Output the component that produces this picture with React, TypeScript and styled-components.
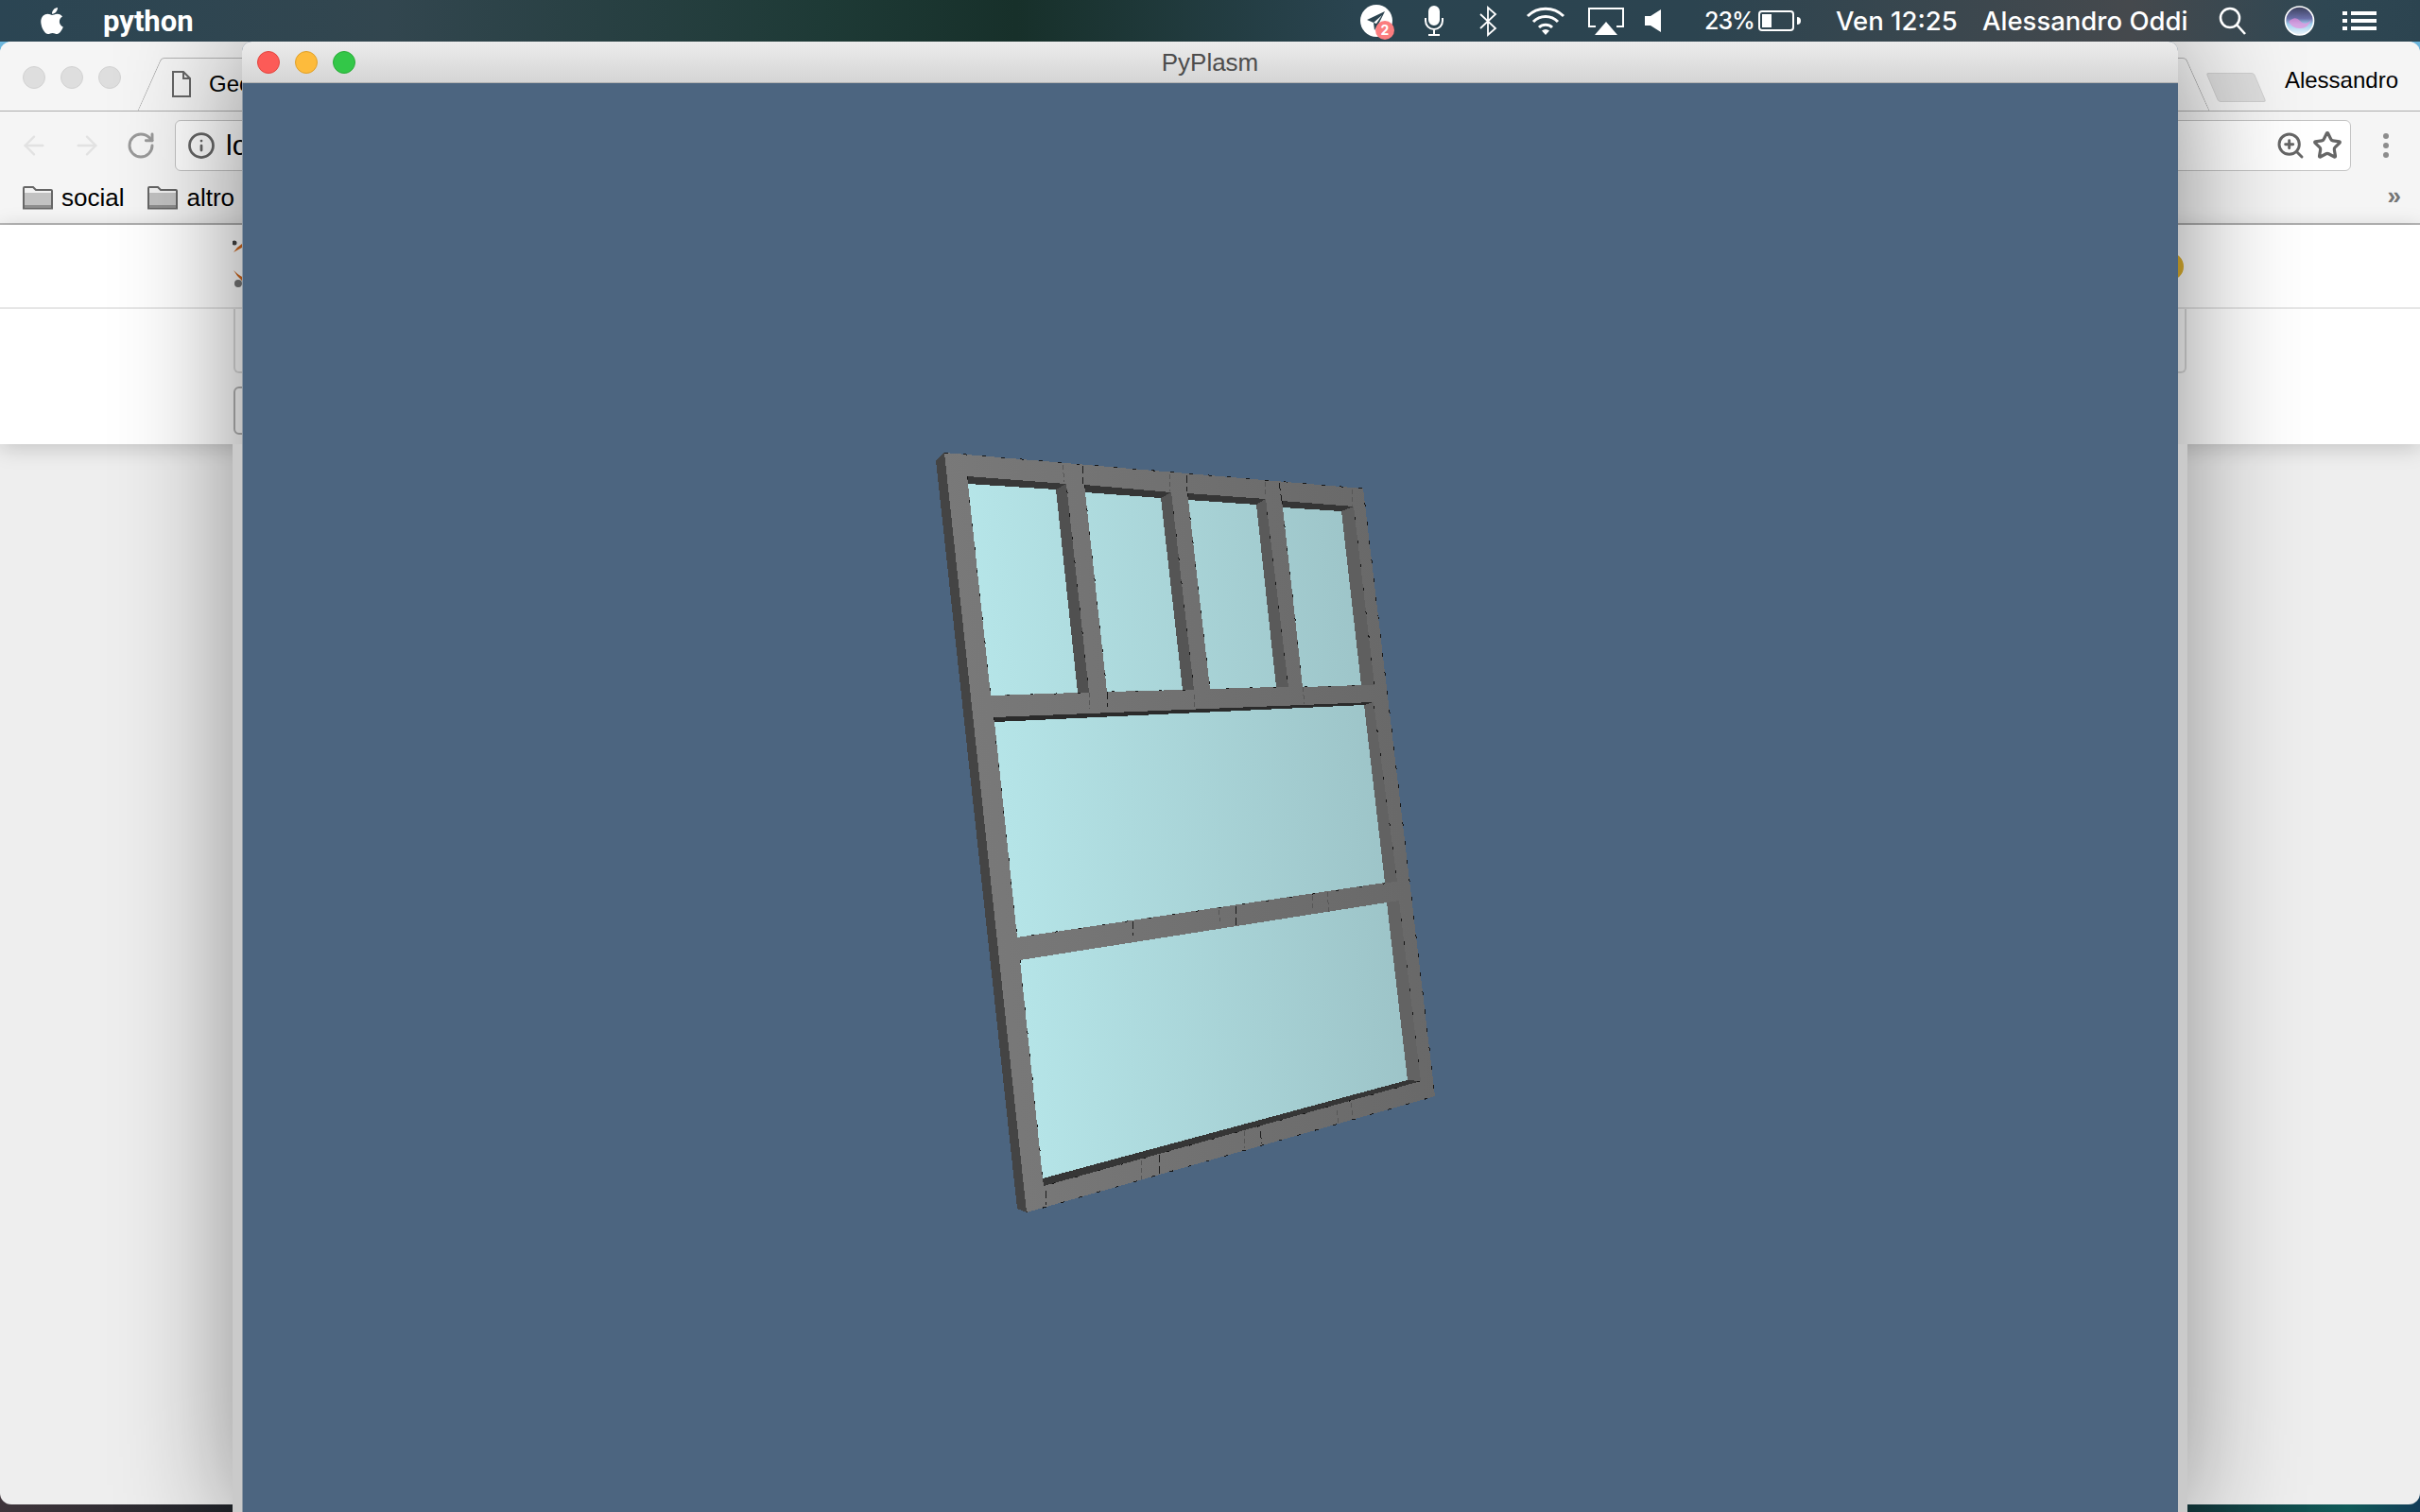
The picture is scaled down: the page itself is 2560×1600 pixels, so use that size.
import React from 'react';
import styled, { createGlobalStyle } from 'styled-components';
import { FaApple } from 'react-icons/fa';
import { ArrowLeft, ArrowRight, RotateCw, Info, Star, ZoomIn } from 'lucide-react';

const GlobalStyle = createGlobalStyle`
    html, body {
        margin: 0;
        padding: 0;
        width: 2560px;
        height: 1600px;
        overflow: hidden;
        font-family: "Liberation Sans", Arial, sans-serif;
    }
`;

const Desktop = styled.div`
    position: relative;
    width: 2560px;
    height: 1600px;
    overflow: hidden;
    background:
        linear-gradient(#6cb6dc 0, #6cb6dc 100px, transparent 100px),
        linear-gradient(90deg, #3f353b 0, #1a2127 12%, #142a30 88%, #0f5a58 97%, #123c58 100%);
`;

const MenuBar = styled.header`
    position: relative;
    z-index: 2;
    height: 44px;
    display: flex;
    align-items: center;
    color: #fff;
    font-family: Inter, "Liberation Sans", sans-serif;
    background: linear-gradient(90deg, #2b4553 0, #32464f 16%, #1e3a36 34%, #17302a 42%, #2a4450 56%, #2c4450 70%, #45494d 88%, #2f4753 96%, #2c4450 100%);
`;

const MenuApp = styled.span`
    margin-left: 40px;
    font-family: Roboto, sans-serif;
    font-size: 31px;
    font-weight: 700;
`;

const MenuRight = styled.div`
    margin-left: auto;
    display: flex;
    align-items: center;
`;

const Slot = styled.div<{ $w: number; $ml: number }>`
    position: relative;
    width: ${p => p.$w}px;
    margin-left: ${p => p.$ml}px;
    height: 44px;
    display: flex;
    align-items: center;
    justify-content: center;
`;

const MenuText = styled.span<{ $ml: number; $w: number; $size: number; $track?: number }>`
    width: ${p => p.$w}px;
    margin-left: ${p => p.$ml}px;
    font-size: ${p => p.$size}px;
    font-weight: 500;
    letter-spacing: ${p => p.$track ?? 0}px;
    white-space: nowrap;
`;

const Badge = styled.span`
    position: absolute;
    left: 16px;
    top: 22px;
    width: 20px;
    height: 20px;
    border-radius: 50%;
    background: #fb7d7f;
    color: #fff;
    font-size: 14px;
    font-weight: 700;
    line-height: 20px;
    text-align: center;
`;

const Browser = styled.div`
    height: 1548px;
    display: flex;
    flex-direction: column;
    border-radius: 12px;
    overflow: hidden;
    background: #eeeeee;
`;

const TabStrip = styled.div`
    height: 74px;
    box-sizing: border-box;
    display: flex;
    align-items: flex-start;
    background: #f5f5f5;
    border-bottom: 1px solid #adadad;
`;

const GreyLights = styled.div`
    display: flex;
    gap: 16px;
    margin: 26px 0 0 24px;
`;

const GreyLight = styled.span`
    width: 24px;
    height: 24px;
    box-sizing: border-box;
    border-radius: 50%;
    background: #dedede;
    border: 1px solid #d2d2d2;
`;

const Tab = styled.div`
    position: relative;
    margin: 17px 0 0 17px;
    width: 2193px;
    height: 56px;
    display: flex;
    align-items: center;
    gap: 19px;
    padding-left: 37px;
    box-sizing: border-box;
    font-size: 24px;
    color: #000;

    &::before,
    &::after {
        content: '';
        position: absolute;
        top: 0;
        bottom: 0;
        width: 40px;
        border-top: 1px solid #b4b4b4;
    }
    &::before {
        left: 13px;
        border-left: 1px solid #a8a8a8;
        border-top-left-radius: 4px;
        transform: skewX(-24deg);
    }
    &::after {
        right: 13px;
        border-right: 1px solid #a8a8a8;
        border-top-right-radius: 4px;
        transform: skewX(24deg);
    }
`;

const TabTopLine = styled.span`
    position: absolute;
    top: 0;
    left: 40px;
    right: 40px;
    border-top: 1px solid #b4b4b4;
`;

const NewTab = styled.div`
    width: 51px;
    height: 31px;
    box-sizing: border-box;
    margin: 33px 0 0 2px;
    background: #dedede;
    border: 1px solid #d0d0d0;
    border-radius: 3px;
    transform: skewX(23deg);
`;

const ProfileName = styled.span`
    margin: 27px 23px 0 auto;
    font-size: 24px;
    line-height: 28px;
    color: #000;
`;

const Toolbar = styled.div`
    height: 120px;
    box-sizing: border-box;
    padding-top: 9px;
    background: #f5f5f5;
    border-bottom: 2px solid #b8b8b8;
`;

const NavRow = styled.div`
    height: 54px;
    display: flex;
    align-items: center;
    color: #e2e2e2;
`;

const NavButton = styled.span<{ $ml: number; $color?: string }>`
    display: flex;
    margin-left: ${p => p.$ml}px;
    color: ${p => p.$color ?? 'inherit'};
`;

const Omnibox = styled.div`
    margin-left: 20px;
    width: 2302px;
    height: 54px;
    box-sizing: border-box;
    display: flex;
    align-items: center;
    padding: 0 8px 0 12px;
    background: #fff;
    border: 1px solid #c4c4c4;
    border-radius: 6px;
    color: #666;
`;

const OmniText = styled.span`
    margin-left: 11px;
    font-size: 30px;
    color: #000;
`;

const OmniTools = styled.div`
    margin-left: auto;
    display: flex;
    align-items: center;
    gap: 7px;
`;

const MoreDots = styled.div`
    margin-left: 34px;
    display: flex;
    flex-direction: column;
    gap: 4px;
`;

const Dot = styled.span`
    width: 6px;
    height: 6px;
    border-radius: 50%;
    background: #8c8c8c;
`;

const BookmarkRow = styled.div`
    height: 55px;
    display: flex;
    align-items: center;
    padding: 2px 0 0 24px;
    box-sizing: border-box;
    font-size: 26px;
    color: #000;
`;

const Bookmark = styled.div`
    display: flex;
    align-items: center;
    gap: 9px;
    margin-right: 25px;
`;

const Chevrons = styled.span`
    margin: -4px 20px 0 auto;
    font-size: 26px;
    font-weight: 700;
    color: #757575;
`;

const PageTop = styled.div`
    position: relative;
    z-index: 0;
    height: 232px;
    background: #fff;
    box-shadow: 0 4px 22px rgba(0, 0, 0, 0.18);
`;

const SiteHeader = styled.div`
    height: 89px;
    box-sizing: border-box;
    display: flex;
    align-items: center;
    justify-content: space-between;
    padding: 0 250px 0 246px;
    border-bottom: 2px solid #e6e6e6;
`;

const YellowDot = styled.span`
    width: 30px;
    height: 30px;
    border-radius: 50%;
    background: #e2b431;
`;

const FormColumn = styled.div`
    width: 2066px;
    margin: 0 auto;
`;

const TextArea = styled.div`
    height: 68px;
    box-sizing: border-box;
    border: 2px solid #dcdcdc;
    border-top: 0;
    border-radius: 0 0 6px 6px;
`;

const TextInput = styled.div`
    width: 1900px;
    height: 51px;
    box-sizing: border-box;
    margin-top: 14px;
    border: 2px solid #b4b4b4;
    border-radius: 6px;
`;

const PlasmWindow = styled.section`
    position: absolute;
    z-index: 1;
    left: 256px;
    top: 44px;
    width: 2048px;
    height: 1570px;
    display: flex;
    flex-direction: column;
    border-radius: 10px 10px 0 0;
    background: #4c6580;
    box-shadow: 0 0 130px rgba(0, 0, 0, 0.48);

    /* page column peeking out on both sides of the window */
    &::before {
        content: '';
        position: absolute;
        z-index: -1;
        left: -10px;
        right: -10px;
        top: 426px;
        bottom: 0;
        background: #cacaca;
    }
`;

const TitleBar = styled.div`
    position: relative;
    height: 44px;
    flex: none;
    box-sizing: border-box;
    display: flex;
    align-items: center;
    justify-content: center;
    padding-top: 2px;
    border-radius: 10px 10px 0 0;
    border-bottom: 1px solid #b2b2b2;
    background: linear-gradient(#ececec, #d5d5d5);
    font-size: 26px;
    color: #4d4d4d;
`;

const Lights = styled.div`
    position: absolute;
    left: 16px;
    top: 10px;
    display: flex;
    gap: 16px;
`;

const Light = styled.span<{ $color: string; $edge: string }>`
    width: 24px;
    height: 24px;
    box-sizing: border-box;
    border-radius: 50%;
    background: ${p => p.$color};
    border: 1px solid ${p => p.$edge};
`;

const Viewport = styled.div`
    flex: 1;
    box-sizing: border-box;
    background: #4c6580;
    box-shadow: inset 1px 0 0 #8d98a4;
`;

const Scene = styled.svg`
    display: block;
    width: 2048px;
    height: 1526px;
    shape-rendering: crispEdges;
`;

type Pt = [number, number];

const pts = (list: Pt[]) => list.map(p => p.join(',')).join(' ');

const panes: { open: Pt[]; glass: Pt[]; strips: { poly: Pt[]; fill: string }[] }[] = [
    {
        open: [[1023, 504], [1128, 512], [1152, 733], [1048, 736]],
        glass: [[1024, 512], [1117, 518], [1140, 733], [1048, 736]],
        strips: [
            { poly: [[1117, 518], [1128, 512], [1152, 733], [1140, 733]], fill: '#505050' },
            { poly: [[1023, 504], [1128, 512], [1117, 518], [1024, 512]], fill: '#383838' },
        ],
    },
    {
        open: [[1147, 513], [1239, 521], [1263, 730], [1171, 732]],
        glass: [[1148, 521], [1228, 527], [1251, 730], [1171, 732]],
        strips: [
            { poly: [[1228, 527], [1239, 521], [1263, 730], [1251, 730]], fill: '#555555' },
            { poly: [[1147, 513], [1239, 521], [1228, 527], [1148, 521]], fill: '#363636' },
        ],
    },
    {
        open: [[1256, 522], [1339, 528], [1363, 727], [1280, 729]],
        glass: [[1257, 529], [1329, 534], [1350, 727], [1280, 729]],
        strips: [
            { poly: [[1329, 534], [1339, 528], [1363, 727], [1350, 727]], fill: '#5a5a5a' },
            { poly: [[1256, 522], [1339, 528], [1329, 534], [1257, 529]], fill: '#363636' },
        ],
    },
    {
        open: [[1356, 530], [1432, 536], [1454, 725], [1378, 727]],
        glass: [[1357, 537], [1419, 541], [1440, 725], [1378, 727]],
        strips: [
            { poly: [[1419, 541], [1432, 536], [1454, 725], [1440, 725]], fill: '#5f5f5f' },
            { poly: [[1356, 530], [1432, 536], [1419, 541], [1357, 537]], fill: '#353535' },
        ],
    },
    {
        open: [[1051, 759], [1453, 743], [1478, 933], [1076, 992]],
        glass: [[1052, 764], [1443, 746], [1465, 934], [1076, 992]],
        strips: [
            { poly: [[1443, 746], [1453, 743], [1478, 933], [1465, 934]], fill: '#626262' },
            { poly: [[1051, 759], [1453, 743], [1443, 746], [1052, 764]], fill: '#2b2b2b' },
        ],
    },
    {
        open: [[1079, 1016], [1480, 953], [1503, 1144], [1104, 1255]],
        glass: [[1079, 1016], [1467, 955], [1489, 1143], [1103, 1247]],
        strips: [
            { poly: [[1467, 955], [1480, 953], [1503, 1144], [1489, 1143]], fill: '#636363' },
            { poly: [[1103, 1247], [1489, 1143], [1503, 1144], [1104, 1255]], fill: '#363636' },
        ],
    },
];

const seams: { from: Pt; to: Pt; dark?: boolean }[] = [
    { from: [1124, 492], to: [1126, 510] },
    { from: [1145, 493], to: [1145, 512], dark: true },
    { from: [1237, 502], to: [1238, 520] },
    { from: [1255, 503], to: [1256, 520], dark: true },
    { from: [1338, 510], to: [1339, 525] },
    { from: [1353, 511], to: [1356, 530], dark: true },
    { from: [1430, 518], to: [1431, 535] },
    { from: [1152, 733], to: [1153, 750] },
    { from: [1171, 732], to: [1172, 748], dark: true },
    { from: [1263, 735], to: [1264, 750] },
    { from: [1378, 727], to: [1380, 745] },
    { from: [1198, 975], to: [1199, 990], dark: true },
    { from: [1289, 963], to: [1291, 975] },
    { from: [1307, 959], to: [1308, 980], dark: true },
    { from: [1388, 948], to: [1389, 962] },
    { from: [1404, 944], to: [1406, 965] },
    { from: [1106, 1260], to: [1107, 1275], dark: true },
    { from: [1207, 1228], to: [1208, 1248] },
    { from: [1226, 1222], to: [1227, 1242], dark: true },
    { from: [1316, 1197], to: [1317, 1215] },
    { from: [1333, 1197], to: [1335, 1210], dark: true },
    { from: [1414, 1175], to: [1416, 1188] },
    { from: [1429, 1167], to: [1431, 1180] },
];

const FrameModel = () => (
    <Scene viewBox="256 88 2048 1526">
        <defs>
            <linearGradient id="face" gradientUnits="userSpaceOnUse" x1="1000" y1="900" x2="1510" y2="860">
                <stop offset="0" stopColor="#7a7a7a" />
                <stop offset="1" stopColor="#686868" />
            </linearGradient>
            <linearGradient id="glass" gradientUnits="userSpaceOnUse" x1="1040" y1="1000" x2="1490" y2="960">
                <stop offset="0" stopColor="#b7e7ea" />
                <stop offset="1" stopColor="#9cc3c7" />
            </linearGradient>
        </defs>
        <polygon points="990,487 999,479 1086,1283 1076,1279" fill="#444444" />
        <polygon points="999,479 1442,517 1518,1160 1086,1283" fill="url(#face)" />
        {panes.map((pane, index) => (
            <g key={index}>
                <polygon points={pts(pane.glass)} fill="url(#glass)" />
                {pane.strips.map((strip, i) => (
                    <polygon key={i} points={pts(strip.poly)} fill={strip.fill} />
                ))}
                <polyline
                    points={pts([pane.open[0], pane.open[3], pane.open[2], pane.open[1]])}
                    fill="none"
                    stroke="#161616"
                    strokeDasharray="3 22"
                />
            </g>
        ))}
        <polyline points="999,479 1442,517 1518,1160 1086,1283" fill="none" stroke="#161616" strokeDasharray="4 16" />
        {seams.map((seam, index) => (
            <line
                key={index}
                x1={seam.from[0]}
                y1={seam.from[1]}
                x2={seam.to[0]}
                y2={seam.to[1]}
                stroke={seam.dark ? '#1c1c1c' : '#565656'}
                strokeDasharray={seam.dark ? '8 4' : '5 3'}
            />
        ))}
    </Scene>
);

const Telegram = () => (
    <svg width="34" height="34" viewBox="0 0 34 34">
        <circle cx="17" cy="17" r="17" fill="#fff" />
        <path d="M26 7 L7 16 L14 19 L15 27 L19 21 Z" fill="#2c4450" />
        <path d="M14 19 L23 11 L17 20 Z" fill="#fff" />
    </svg>
);

const Mic = () => (
    <svg width="20" height="32" viewBox="0 0 20 32" fill="none" stroke="#fff" strokeWidth="2">
        <rect x="5" y="1" width="10" height="19" rx="5" fill="#fff" />
        <path d="M1 13v3a9 9 0 0 0 18 0v-3M10 25v5M4 31h12" />
    </svg>
);

const Bluetooth = () => (
    <svg width="20" height="33" viewBox="0 0 20 33" fill="none" stroke="#fff" strokeWidth="1.8">
        <path d="M2 9 L18 24 L10 31 V2 L18 9 L2 24" />
    </svg>
);

const Wifi = () => (
    <svg width="42" height="30" viewBox="0 0 42 30" fill="none" stroke="#fff" strokeWidth="3">
        <path d="M2 10 a27 27 0 0 1 38 0" />
        <path d="M8 16 a18 18 0 0 1 26 0" />
        <path d="M14 22 a10 10 0 0 1 14 0" />
        <path d="M21 30 L17 25.5 a6 6 0 0 1 8 0 Z" fill="#fff" stroke="none" />
    </svg>
);

const Airplay = () => (
    <svg width="38" height="29" viewBox="0 0 38 29" fill="none">
        <path d="M8 20 H1 V1 H37 V20 H30" stroke="#fff" strokeWidth="2" />
        <path d="M19 15 L31 29 H7 Z" fill="#fff" />
    </svg>
);

const Speaker = () => (
    <svg width="17" height="24" viewBox="0 0 17 24">
        <path d="M0 7 H6 L17 0 V24 L6 17 H0 Z" fill="#fff" />
    </svg>
);

const Battery = () => (
    <svg width="46" height="22" viewBox="0 0 46 22" fill="none">
        <rect x="1" y="1" width="36" height="20" rx="3" stroke="#fff" strokeWidth="2" />
        <rect x="4" y="4" width="10" height="14" fill="#fff" />
        <path d="M41 7 a4 4 0 0 1 0 8 Z" fill="#fff" />
    </svg>
);

const Search = () => (
    <svg width="30" height="30" viewBox="0 0 30 30" fill="none" stroke="#fff" strokeWidth="2.6">
        <circle cx="12" cy="12" r="10" />
        <path d="M19 19 L28 29" />
    </svg>
);

const Siri = () => (
    <svg width="33" height="32" viewBox="0 0 33 32">
        <defs>
            <linearGradient id="siri" x1="0" y1="0" x2="0" y2="1">
                <stop offset="0" stopColor="#3a3f5a" />
                <stop offset="0.42" stopColor="#6a6fa8" />
                <stop offset="0.62" stopColor="#9fd0ee" />
                <stop offset="1" stopColor="#eef4fa" />
            </linearGradient>
        </defs>
        <circle cx="16.5" cy="16" r="15" fill="url(#siri)" stroke="#fff" strokeWidth="1.6" />
        <path d="M5 17 Q12 10 17 16 T29 15 Q25 25 16 24 Q9 24 5 17Z" fill="#e78fdc" opacity="0.7" />
    </svg>
);

const NotificationList = () => (
    <svg width="36" height="22" viewBox="0 0 36 22" fill="#fff">
        <rect x="0" y="1" width="5" height="4" />
        <rect x="9" y="1" width="27" height="4" />
        <rect x="0" y="9" width="5" height="4" />
        <rect x="9" y="9" width="27" height="4" />
        <rect x="0" y="17" width="5" height="4" />
        <rect x="9" y="17" width="27" height="4" />
    </svg>
);

const Folder = () => (
    <svg width="32" height="25" viewBox="0 0 32 25">
        <path d="M1 23.5 V2 Q1 1 2 1 H11 L14 4 H30 Q31 4 31 5 V23.5 Z" fill="#f2f2f2" stroke="#666" strokeWidth="2" />
        <rect x="2" y="7" width="28" height="13" fill="#c2c2c2" />
        <rect x="2" y="20" width="28" height="3" fill="#8e8e8e" />
    </svg>
);

const DocIcon = () => (
    <svg width="20" height="28" viewBox="0 0 20 28" fill="none" stroke="#666" strokeWidth="2">
        <path d="M1 1 H12 L19 8 V27 H1 Z M12 1 V8 H19" />
    </svg>
);

const SiteLogo = () => (
    <svg width="14" height="56" viewBox="0 0 14 56">
        <circle cx="2" cy="3" r="2.5" fill="#444" />
        <path d="M1 13 Q5 7 10 4 L10 8 Q6 10 1 13Z" fill="#d2691e" />
        <path d="M1 32 Q5 39 10 43 L10 39 Q6 37 1 32Z" fill="#d2691e" />
        <circle cx="6" cy="46" r="4" fill="#777" />
    </svg>
);

const App = () => (
    <Desktop>
        <GlobalStyle />
        <MenuBar>
            <Slot $w={28} $ml={41}>
                <FaApple size={32} color="#fff" />
            </Slot>
            <MenuApp>python</MenuApp>
            <MenuRight>
                <Slot $w={34} $ml={0}>
                    <Telegram />
                    <Badge>2</Badge>
                </Slot>
                <Slot $w={20} $ml={34}><Mic /></Slot>
                <Slot $w={20} $ml={37}><Bluetooth /></Slot>
                <Slot $w={42} $ml={30}><Wifi /></Slot>
                <Slot $w={38} $ml={24}><Airplay /></Slot>
                <Slot $w={17} $ml={22}><Speaker /></Slot>
                <MenuText $ml={46} $w={47} $size={25} $track={-1}>23%</MenuText>
                <Slot $w={46} $ml={10}><Battery /></Slot>
                <MenuText $ml={36} $w={127} $size={27.5}>Ven 12:25</MenuText>
                <MenuText $ml={28} $w={217} $size={27.5}>Alessandro Oddi</MenuText>
                <Slot $w={30} $ml={33}><Search /></Slot>
                <Slot $w={33} $ml={39}><Siri /></Slot>
                <Slot $w={36} $ml={29}><NotificationList /></Slot>
                <Slot $w={0} $ml={46} />
            </MenuRight>
        </MenuBar>
        <Browser>
            <TabStrip>
                <GreyLights>
                    <GreyLight />
                    <GreyLight />
                    <GreyLight />
                </GreyLights>
                <Tab>
                    <TabTopLine />
                    <DocIcon />
                    Geo
                </Tab>
                <NewTab />
                <ProfileName>Alessandro</ProfileName>
            </TabStrip>
            <Toolbar>
                <NavRow>
                    <NavButton $ml={20}><ArrowLeft size={32} strokeWidth={1.8} /></NavButton>
                    <NavButton $ml={24}><ArrowRight size={32} strokeWidth={1.8} /></NavButton>
                    <NavButton $ml={25} $color="#9a9a9a"><RotateCw size={32} strokeWidth={2.2} /></NavButton>
                    <Omnibox>
                        <Info size={30} strokeWidth={2.2} />
                        <OmniText>lo</OmniText>
                        <OmniTools>
                            <ZoomIn size={32} strokeWidth={2.2} />
                            <Star size={32} strokeWidth={2.4} />
                        </OmniTools>
                    </Omnibox>
                    <MoreDots>
                        <Dot />
                        <Dot />
                        <Dot />
                    </MoreDots>
                </NavRow>
                <BookmarkRow>
                    <Bookmark><Folder />social</Bookmark>
                    <Bookmark><Folder />altro</Bookmark>
                    <Chevrons>»</Chevrons>
                </BookmarkRow>
            </Toolbar>
            <PageTop>
                <SiteHeader>
                    <SiteLogo />
                    <YellowDot />
                </SiteHeader>
                <FormColumn>
                    <TextArea />
                    <TextInput />
                </FormColumn>
            </PageTop>
        </Browser>
        <PlasmWindow>
            <TitleBar>
                <Lights>
                    <Light $color="#fc5b57" $edge="#e2463f" />
                    <Light $color="#fdbb3c" $edge="#e0a028" />
                    <Light $color="#33c748" $edge="#2aac39" />
                </Lights>
                PyPlasm
            </TitleBar>
            <Viewport>
                <FrameModel />
            </Viewport>
        </PlasmWindow>
    </Desktop>
);

export default App;
